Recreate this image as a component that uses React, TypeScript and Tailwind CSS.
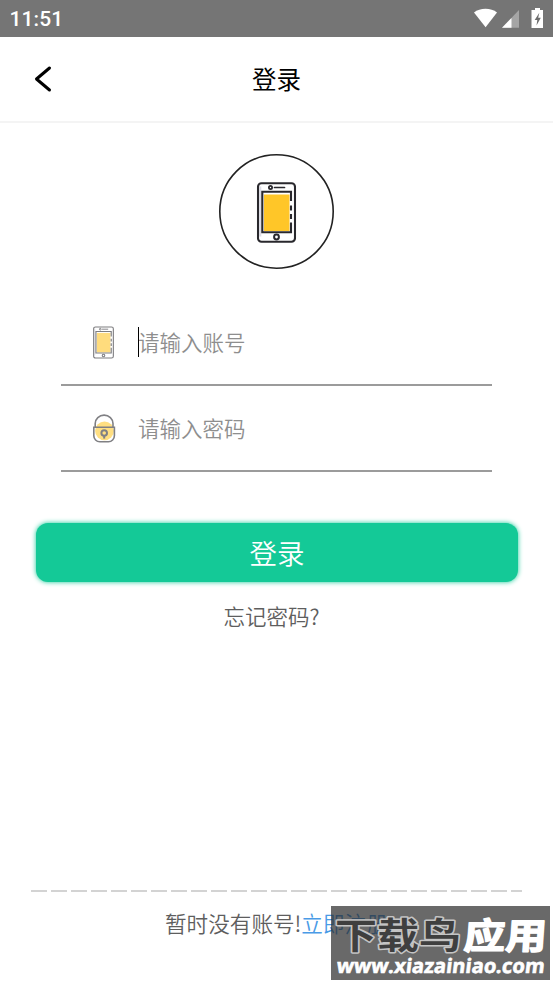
import type { ReactNode } from "react";

function StatusBar() {
  return (
    <div className="relative h-[37px] bg-[#757575] text-white">
      <span className="absolute left-[9.5px] top-[7px] font-['Roboto',sans-serif] text-[21px] font-medium leading-[25px] tracking-[0.1px]">11:51</span>
      <svg className="absolute right-0 top-0" width="90" height="37" viewBox="463 0 90 37">
        <path d="M474 12.4C480 7.6 491 7.6 497 12.4L485.6 27.2Z" fill="#fff" />
        <path d="M502 27.7 519 10v17.7Z" fill="#a5a5a5" />
        <path d="M502 27.7 511.5 18v9.7Z" fill="#fff" />
        <path d="M532 10h3V8h5v2h3v18h-11.5V10Z" fill="#fff" />
        <path d="M539.3 12.7 534.7 20h2.6l-.8 5.4 4.3-7.6h-2.6Z" fill="#6d6d6d" />
      </svg>
    </div>
  );
}

function PhoneIcon({ className }: { className?: string }) {
  return (
    <svg className={className} viewBox="0 0 40 62" fill="none" stroke="#29282d">
      <path d="M3.8 5v50" stroke="#dcdce6" strokeWidth="2" />
      <path d="M7.5 13H33v36.5H7.5Z" fill="#ffc628" stroke="none" />
      <rect x="1.5" y="1.8" width="37" height="58.4" rx="3.5" strokeWidth="2.1" />
      <path d="M34.5 19.5V10.3H5.8v40.5h28.7V41M34.5 24v5M34.5 32.5v5" strokeWidth="2.1" />
      <circle cx="14" cy="6" r="1.6" strokeWidth="1.8" />
      <path d="M18 6h10" strokeWidth="1.7" strokeLinecap="round" />
      <circle cx="20" cy="55.5" r="2.4" strokeWidth="2" />
    </svg>
  );
}

function LockIcon({ className }: { className?: string }) {
  return (
    <svg className={className} viewBox="0 0 25 30" fill="none" stroke="#808084" strokeWidth="1.6">
      <circle cx="13.5" cy="17.8" r="9.4" fill="#ffdf82" stroke="none" />
      <path d="M2.8 14.3h20.6v8.4a6 6 0 0 1-6 6H8.8a6 6 0 0 1-6-6Z" />
      <path d="M4.2 14.3v-3.7a8.2 7.8 0 0 1 17.8 0v3.7" />
      <circle cx="13.2" cy="20" r="2.8" strokeWidth="2" />
      <path d="M13.2 22.8v2.8" strokeWidth="2" />
    </svg>
  );
}

function Field({ icon, placeholder, focused }: { icon: ReactNode; placeholder: string; focused?: boolean }) {
  return (
    <div className="mx-[61px] flex h-[86px] w-[431px] items-center border-b-2 border-[#9b9b9b] pl-[30px]">
      {icon}
      <div className="relative ml-[22px] text-[21.5px] font-[350] leading-[30px] text-[#8e8e8e]">
        {focused && <span className="absolute left-0 top-0 h-[30px] w-px bg-black" />}
        {placeholder}
      </div>
    </div>
  );
}

function Watermark() {
  return (
    <div className="absolute left-[331px] top-[906px] h-[74px] w-[219px] bg-[#292929]/70">
      <svg className="block" width="219" height="74" fontFamily="'Noto Sans CJK SC', sans-serif" fontWeight="700">
        <g fontSize="36" strokeLinejoin="round" paintOrder="stroke">
          <text x="4" y="43" textLength="126" lengthAdjust="spacingAndGlyphs" fill="#3f3f3f" stroke="#c4c4c4" strokeWidth="3">下载鸟</text>
          <text transform="translate(132 43) skewX(-4)" textLength="83" lengthAdjust="spacingAndGlyphs" fill="#fff" stroke="#fff" strokeWidth="1.4">应用</text>
        </g>
        <text transform="translate(5 67) skewX(-7)" textLength="208" lengthAdjust="spacingAndGlyphs" fontFamily="'Open Sans', sans-serif" fontSize="20" fill="#fff" stroke="#fff" strokeWidth="0.6">www.xiazainiao.com</text>
      </svg>
    </div>
  );
}

export default function App() {
  return (
    <div className="relative flex h-[984px] w-[553px] flex-col overflow-hidden bg-white font-['Noto_Sans_CJK_SC',sans-serif]">
      <StatusBar />
      <header className="relative flex h-[86px] items-center justify-center border-b-2 border-[#f4f4f4]">
        <svg className="absolute left-[34px] top-[28px]" width="18" height="28" fill="none" stroke="#000" strokeWidth="3" strokeLinecap="round" strokeLinejoin="round">
          <path d="M15.5 3 2.5 14l13 11" />
        </svg>
        <h1 className="text-[24.5px] leading-[36px] text-black">登录</h1>
      </header>

      <svg className="mx-auto mt-[31px] size-[115px]" viewBox="0 0 115 115">
        <circle cx="57.5" cy="57.5" r="56.7" fill="none" stroke="#222" strokeWidth="1.6" />
        <svg x="37.5" y="27.5" width="40" height="62">
          <PhoneIcon />
        </svg>
      </svg>

      <form className="mt-[31px]">
        <Field icon={<PhoneIcon className="h-[33px] w-[25px] opacity-60" />} placeholder="请输入账号" focused />
        <Field icon={<LockIcon className="h-[30px] w-[25px]" />} placeholder="请输入密码" />
      </form>

      <button className="ml-[36px] mt-[51px] h-[59px] w-[482px] rounded-[12px] bg-[#14c997] pb-[2px] text-[27.5px] font-[350] leading-[40px] text-white shadow-[0_0_5px_#14c997]">登录</button>
      <p className="mt-[18px] pr-[10px] text-center text-[21.5px] font-[350] leading-[32px] text-[#5e5e5e]">忘记密码?</p>

      <div className="absolute inset-x-0 top-[890px]">
        <div className="mx-[31px] h-[2px] bg-[repeating-linear-gradient(90deg,#d3d3d3_0_16px,transparent_16px_20px)]" />
        <p className="mt-[15px] pl-[165px] text-[21.6px] font-[350] leading-[32px] text-[#5e5e5e]">
          暂时没有账号!<a className="text-[#4a9be6]">立即注册</a>
        </p>
      </div>
      <Watermark />
    </div>
  );
}
